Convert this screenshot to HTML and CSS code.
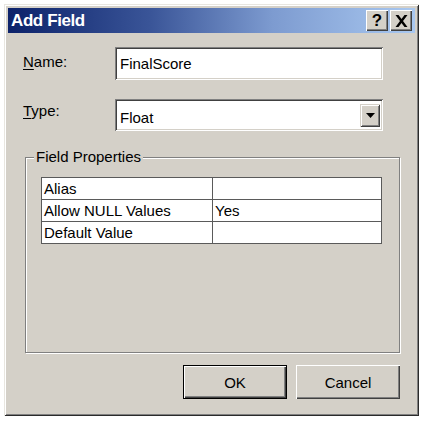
FILE: index.html
```html
<!DOCTYPE html>
<html>
<head>
<meta charset="utf-8">
<link rel="stylesheet" href="styles.css">
</head>
<body>
<div class="window">
  <div class="titlebar">
    <span class="title">Add Field</span>
    <div class="tb-buttons">
      <div class="tb-btn help">?</div>
      <div class="tb-btn close">
        <svg width="13" height="12" viewBox="0 0 13 12"><path d="M0.5 0h3l3 4 3-4h3L8 6l4.5 6h-3l-3-4-3 4h-3L5 6z" fill="#000"/></svg>
      </div>
    </div>
  </div>
  <div class="content">
    <div class="row name-row">
      <label class="lbl"><u>N</u>ame:</label>
      <div class="textbox">FinalScore</div>
    </div>
    <div class="row type-row">
      <label class="lbl"><u>T</u>ype:</label>
      <div class="combo">
        <span class="combo-text">Float</span>
        <span class="drop"><svg width="9" height="5" viewBox="0 0 9 5"><path d="M0 0h9L4.5 5z" fill="#000"/></svg></span>
      </div>
    </div>
    <fieldset class="group">
      <legend>Field Properties</legend>
      <div class="group-body">
        <table class="props">
          <tr><td class="k">Alias</td><td class="v"></td></tr>
          <tr><td class="k">Allow NULL Values</td><td class="v">Yes</td></tr>
          <tr><td class="k">Default Value</td><td class="v"></td></tr>
        </table>
      </div>
    </fieldset>
    <div class="buttons">
      <div class="btn default"><span>OK</span></div>
      <div class="btn"><span>Cancel</span></div>
    </div>
  </div>
</div>
</body>
</html>
```
FILE: styles.css
```css
* { box-sizing: border-box; }
html, body { margin: 0; padding: 0; background: #fff; }
body {
  font-family: "Liberation Sans", Arial, sans-serif;
  font-size: 15px;
  color: #000;
}
.window {
  margin: 4px 0 0 4px;
  width: 415px;
  height: 412px;
  background: #d4d0c8;
  padding: 4px 4px 4px 4px;
  box-shadow: inset 1px 1px 0 #e8e6e0, inset -1px -1px 0 #2a2a2a, inset 2px 2px 0 #fff, inset -2px -2px 0 #808080;
  display: flex;
  flex-direction: column;
}
.titlebar {
  height: 25px;
  background: linear-gradient(to right, #0c226a 0%, #3a5598 35%, #7d9bd0 65%, #a9c8f0 100%);
  display: flex;
  align-items: center;
  justify-content: space-between;
  padding: 0 3px 0 3px;
}
.title {
  color: #fff;
  font-weight: bold;
  font-size: 17px;
  letter-spacing: -0.4px;
  font-family: "Liberation Sans", Arial, sans-serif;
}
.tb-buttons { display: flex; gap: 2px; }
.tb-btn {
  width: 22px;
  height: 21px;
  background: #d4d0c8;
  box-shadow: inset 1px 1px 0 #fff, inset -1px -1px 0 #404040, inset -2px -2px 0 #808080;
  display: flex;
  align-items: center;
  justify-content: center;
  font-weight: bold;
  font-size: 17px;
}
.help { padding-top: 1px; }
.content {
  flex: 1;
  padding: 14px 15px 0 15px;
  display: flex;
  flex-direction: column;
}
.row {
  display: flex;
  align-items: flex-start;
}
.lbl {
  width: 92px;
  line-height: 17px;
}
.lbl u { text-decoration-thickness: 1px; text-underline-offset: 2px; }
.name-row .lbl { padding-top: 6px; }
.type-row { margin-top: 19px; }
.type-row .lbl { padding-top: 3px; }
.textbox, .combo {
  width: 268px;
  background: #fff;
  box-shadow: inset 1px 1px 0 #808080, inset -1px -1px 0 #fff, inset 2px 2px 0 #404040, inset -2px -2px 0 #d4d0c8;
}
.textbox {
  height: 33px;
  padding: 8px 0 0 5px;
  line-height: 17px;
}
.combo {
  height: 32px;
  display: flex;
  align-items: center;
  justify-content: space-between;
  padding: 2px 2px 2px 5px;
}
.combo-text { padding-top: 4px; line-height: 17px; }
.drop {
  width: 20px;
  height: 23px;
  margin-right: 1px;
  background: #d4d0c8;
  box-shadow: inset 1px 1px 0 #d4d0c8, inset -1px -1px 0 #404040, inset 2px 2px 0 #fff, inset -2px -2px 0 #808080;
  display: flex;
  align-items: center;
  justify-content: center;
}
.group {
  margin: 18px 0 0 2px;
  padding: 0;
  width: 375px;
  height: 204px;
  min-width: 0;
  border: 1px solid #808080;
  box-shadow: inset 1px 1px 0 #fff, 1px 1px 0 #fff;
}
.group legend {
  margin-left: 8px;
  padding: 0 2px;
  line-height: 16px;
  background: #d4d0c8;
  position: relative;
}
.group-body {
  padding: 12px 0 0 15px;
}
.props {
  border-collapse: collapse;
  width: 341px;
  background: #fff;
}
.props td {
  border: 1px solid #5a5a5a;
  height: 22px;
  padding: 0 0 0 2px;
  line-height: 17px;
}
.props td.k { width: 171px; }
.buttons {
  margin-top: 12px;
  display: flex;
  justify-content: flex-end;
  gap: 9px;
}
.btn {
  width: 104px;
  height: 34px;
  background: #d4d0c8;
  box-shadow: inset 1px 1px 0 #fff, inset -1px -1px 0 #404040, inset -2px -2px 0 #808080;
  display: flex;
  align-items: center;
  justify-content: center;
  line-height: 17px;
}
.btn.default {
  box-shadow: inset 0 0 0 1px #000, inset 2px 2px 0 #fff, inset -2px -2px 0 #404040, inset -3px -3px 0 #808080;
}
```
